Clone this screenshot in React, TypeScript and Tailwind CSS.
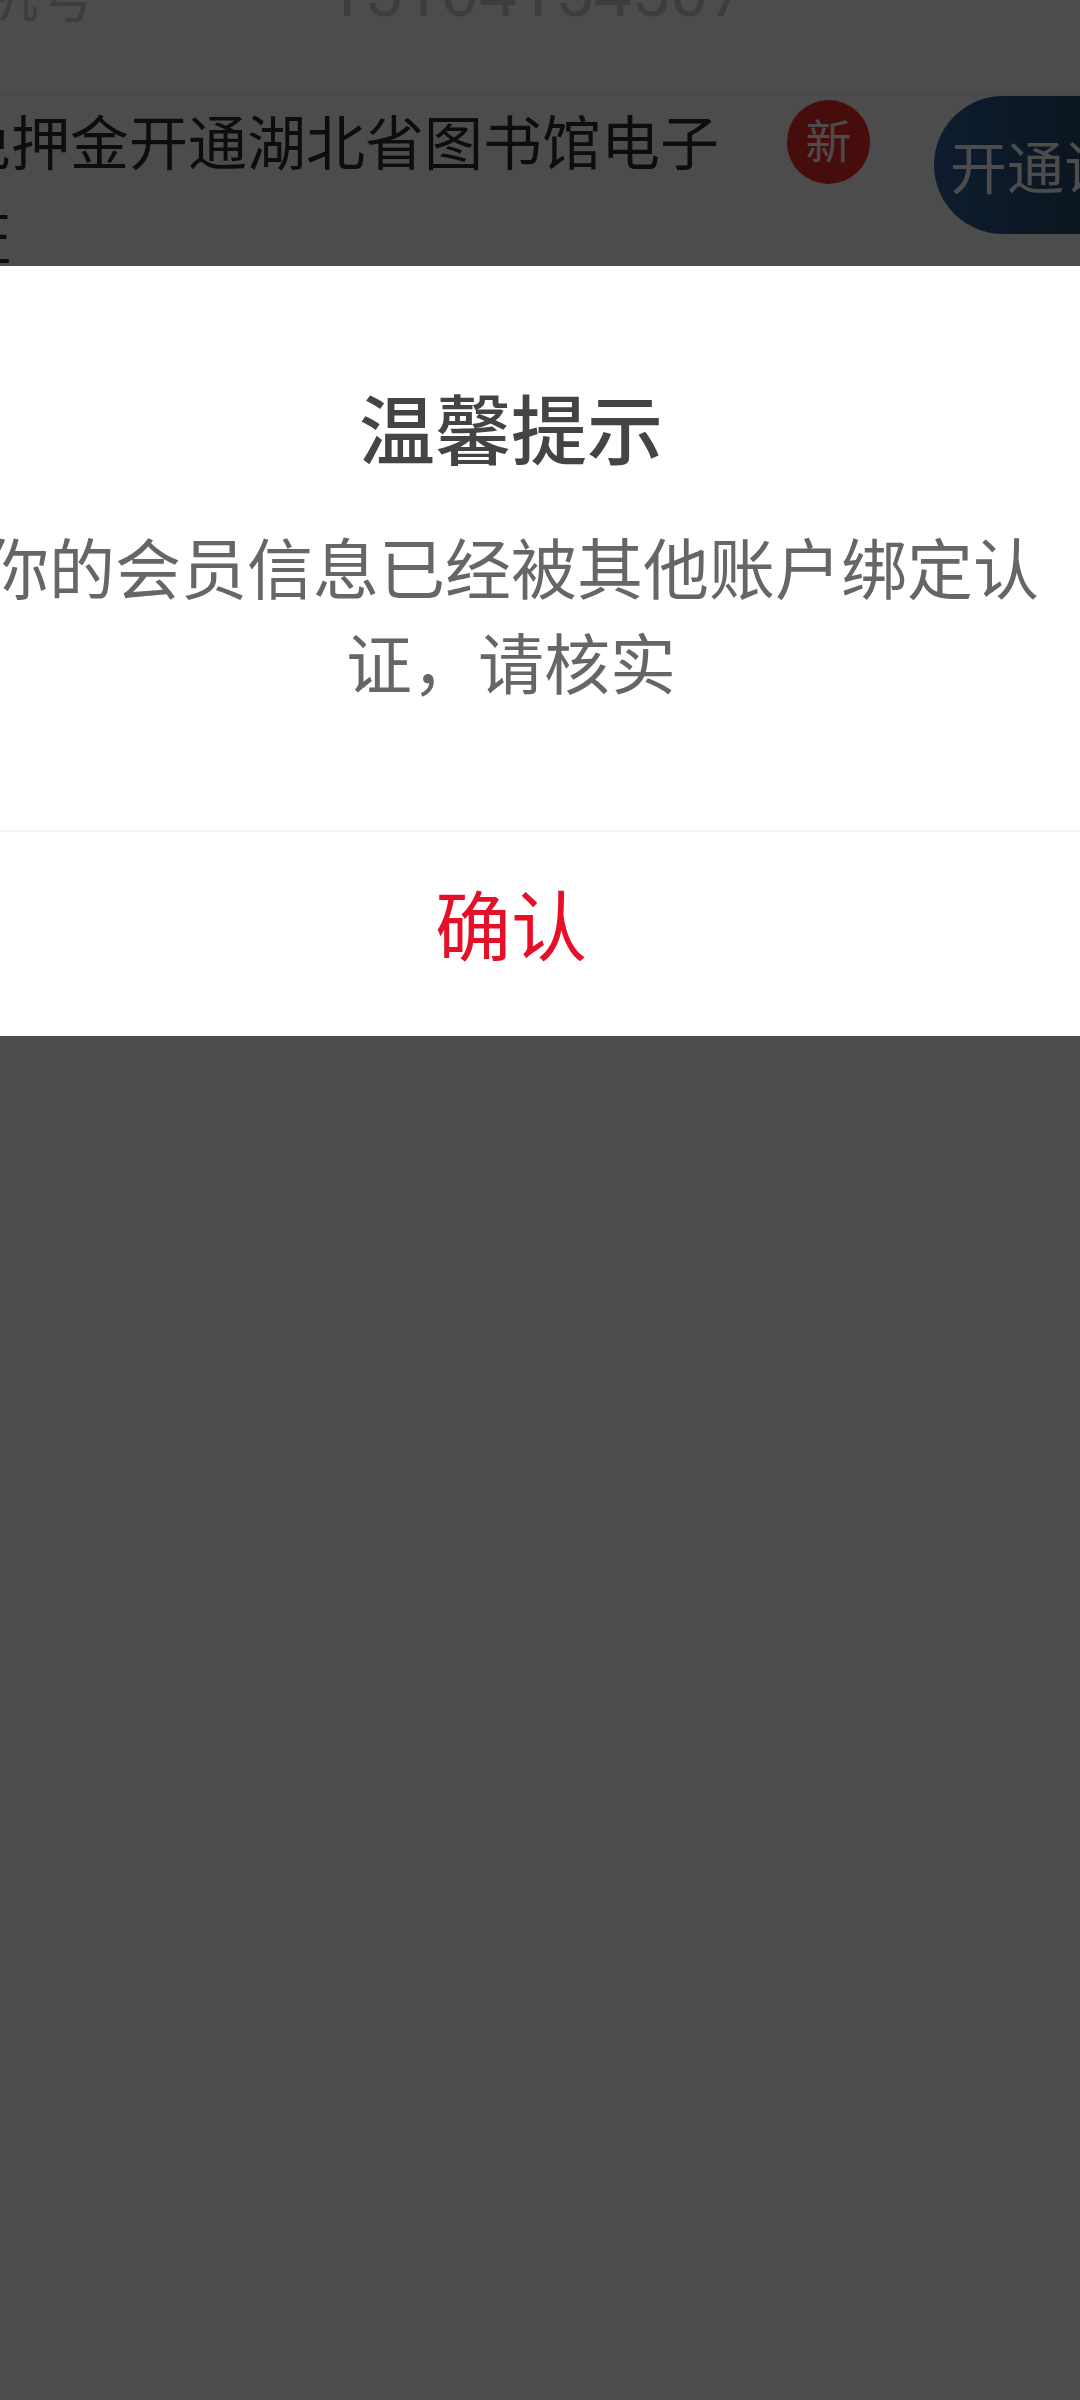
import * as React from "react"

function Row({ children }: { children: React.ReactNode }) {
    return <div className="flex items-start">{children}</div>
}

export default function App() {
    const [open, setOpen] = React.useState(true)

    return (
        <div
            lang="zh-CN"
            className="relative min-h-screen overflow-hidden bg-white font-['Noto_Sans_CJK_SC',sans-serif]"
        >
            <main className="-mt-14 -ml-20">
                <Row>
                    <label htmlFor="phone" className="w-[406px] shrink-0 text-[59px] leading-[95px] text-[#cccccc]">
                        手机号
                    </label>
                    <input
                        id="phone"
                        type="tel"
                        readOnly
                        value="15104154507"
                        className="h-[98px] min-w-0 flex-1 bg-transparent font-[Roboto,sans-serif] text-[68px] text-[#cccccc] outline-none"
                    />
                </Row>
                <div className="mt-[52px] border-t-2 border-[#f5f5f5]" />
                <div className="pl-8">
                    <Row>
                        <p className="-mt-1 w-[835px] shrink-0 pr-10 text-[59px] leading-[95px] text-[#2c2c2c]">
                            免押金开通湖北省图书馆电子证
                        </p>
                        <span className="mt-1 flex h-[84px] w-[83px] shrink-0 items-center justify-center rounded-full bg-[#ee2c28] pb-2 text-[46px] text-white">
                            新
                        </span>
                        <button className="ml-16 h-[138px] shrink-0 rounded-full bg-linear-to-r from-[#30609f] to-[#203848] px-4 text-[57px] text-white">
                            开通证件
                        </button>
                    </Row>
                </div>
            </main>

            {open && (
                <div className="absolute inset-0 bg-black/70 pt-[266px]">
                    <div
                        role="alertdialog"
                        aria-modal="true"
                        aria-labelledby="tip-title"
                        aria-describedby="tip-text"
                        className="-ml-[58px] bg-white text-center"
                    >
                        <div className="px-2 pt-[108px] pb-[122px]">
                            <h2 id="tip-title" className="text-[76px] leading-[104px] font-medium text-[#444444]">
                                温馨提示
                            </h2>
                            <p id="tip-text" className="mx-auto max-w-[1070px] mt-10 text-[66px] leading-[95px] text-[#666666]">
                                你的会员信息已经被其他账户绑定认证，请核实
                            </p>
                        </div>
                        <button
                            onClick={() => setOpen(false)}
                            className="block h-[206px] w-full border-t-2 border-[#f3f3f3] pb-6 text-[76px] text-[#e60f28]"
                        >
                            确认
                        </button>
                    </div>
                </div>
            )}
        </div>
    )
}
